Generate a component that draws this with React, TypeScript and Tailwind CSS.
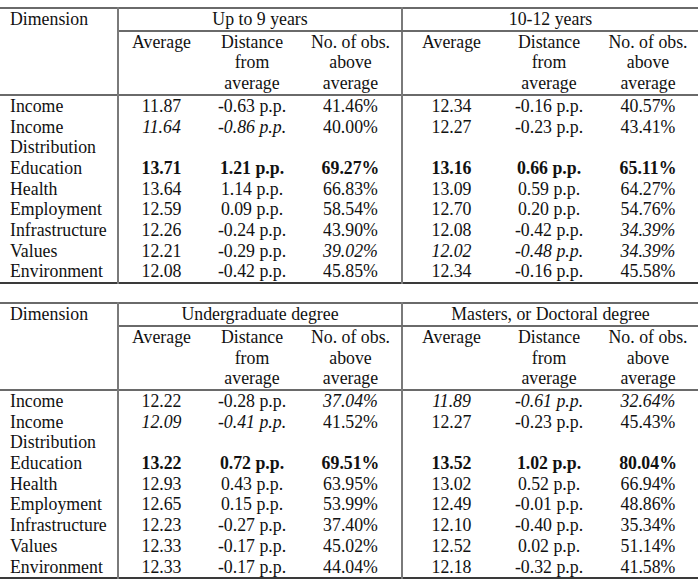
import React from "react";

type Cell = { v: string; s?: "b" | "i" };
type Row = { name: string[]; cells: Cell[] };

const n = (v: string): Cell => ({ v });
const b = (v: string): Cell => ({ v, s: "b" });
const it = (v: string): Cell => ({ v, s: "i" });

const t1: Row[] = [
  { name: ["Income"], cells: [n("11.87"), n("-0.63 p.p."), n("41.46%"), n("12.34"), n("-0.16 p.p."), n("40.57%")] },
  { name: ["Income", "Distribution"], cells: [it("11.64"), it("-0.86 p.p."), n("40.00%"), n("12.27"), n("-0.23 p.p."), n("43.41%")] },
  { name: ["Education"], cells: [b("13.71"), b("1.21 p.p."), b("69.27%"), b("13.16"), b("0.66 p.p."), b("65.11%")] },
  { name: ["Health"], cells: [n("13.64"), n("1.14 p.p."), n("66.83%"), n("13.09"), n("0.59 p.p."), n("64.27%")] },
  { name: ["Employment"], cells: [n("12.59"), n("0.09 p.p."), n("58.54%"), n("12.70"), n("0.20 p.p."), n("54.76%")] },
  { name: ["Infrastructure"], cells: [n("12.26"), n("-0.24 p.p."), n("43.90%"), n("12.08"), n("-0.42 p.p."), it("34.39%")] },
  { name: ["Values"], cells: [n("12.21"), n("-0.29 p.p."), it("39.02%"), it("12.02"), it("-0.48 p.p."), it("34.39%")] },
  { name: ["Environment"], cells: [n("12.08"), n("-0.42 p.p."), n("45.85%"), n("12.34"), n("-0.16 p.p."), n("45.58%")] },
];

const t2: Row[] = [
  { name: ["Income"], cells: [n("12.22"), n("-0.28 p.p."), it("37.04%"), it("11.89"), it("-0.61 p.p."), it("32.64%")] },
  { name: ["Income", "Distribution"], cells: [it("12.09"), it("-0.41 p.p."), n("41.52%"), n("12.27"), n("-0.23 p.p."), n("45.43%")] },
  { name: ["Education"], cells: [b("13.22"), b("0.72 p.p."), b("69.51%"), b("13.52"), b("1.02 p.p."), b("80.04%")] },
  { name: ["Health"], cells: [n("12.93"), n("0.43 p.p."), n("63.95%"), n("13.02"), n("0.52 p.p."), n("66.94%")] },
  { name: ["Employment"], cells: [n("12.65"), n("0.15 p.p."), n("53.99%"), n("12.49"), n("-0.01 p.p."), n("48.86%")] },
  { name: ["Infrastructure"], cells: [n("12.23"), n("-0.27 p.p."), n("37.40%"), n("12.10"), n("-0.40 p.p."), n("35.34%")] },
  { name: ["Values"], cells: [n("12.33"), n("-0.17 p.p."), n("45.02%"), n("12.52"), n("0.02 p.p."), n("51.14%")] },
  { name: ["Environment"], cells: [n("12.33"), n("-0.17 p.p."), n("44.04%"), n("12.18"), n("-0.32 p.p."), n("41.58%")] },
];

const widths = [118, 86, 96, 102, 98, 98, 100];

function Table({ g1, g2, rows }: { g1: string; g2: string; rows: Row[] }) {
  return (
    <table className="table-fixed border-collapse w-[698px] border-t-2 border-b-2 border-t-[#6a6a6a] border-b-[#3a3a3a]">
      <colgroup>
        {widths.map((w, i) => (
          <col key={i} style={{ width: w }} />
        ))}
      </colgroup>
      <tbody>
        <tr>
          <td rowSpan={2} className="align-top pl-[10px] border-r-2 border-r-[#7a7a7a]">
            Dimension
          </td>
          <td colSpan={3} className="text-center border-b-2 border-b-[#6a6a6a] border-r-2 border-r-[#7a7a7a]">
            {g1}
          </td>
          <td colSpan={3} className="text-center border-b-2 border-b-[#6a6a6a]">
            {g2}
          </td>
        </tr>
        <tr className="border-b-2 border-b-[#6a6a6a]">
          <td className="align-top text-center">Average</td>
          <td className="align-top text-center">
            Distance
            <br />
            from
            <br />
            average
          </td>
          <td className="align-top text-center border-r-2 border-r-[#7a7a7a]">
            No. of obs.
            <br />
            above
            <br />
            average
          </td>
          <td className="align-top text-center">Average</td>
          <td className="align-top text-center">
            Distance
            <br />
            from
            <br />
            average
          </td>
          <td className="align-top text-center">
            No. of obs.
            <br />
            above
            <br />
            average
          </td>
        </tr>
        {rows.map((r, ri) => (
          <tr key={ri}>
            <td className="align-top pl-[10px] border-r-2 border-r-[#7a7a7a]">
              {r.name.map((x, k) => (
                <div key={k}>{x}</div>
              ))}
            </td>
            {r.cells.map((c, ci) => (
              <td
                key={ci}
                className={
                  "align-top text-center whitespace-nowrap " +
                  (c.s === "b" ? "font-bold " : c.s === "i" ? "italic " : "") +
                  (ci === 2 ? "border-r-2 border-r-[#7a7a7a]" : "")
                }
              >
                {c.v}
              </td>
            ))}
          </tr>
        ))}
      </tbody>
    </table>
  );
}

export default function App() {
  return (
    <div
      className="w-[700px] h-[586px] bg-white text-[#111] text-[17.8px] leading-[20.7px] pt-[7px] flex flex-col gap-[18px]"
      style={{ fontFamily: '"Liberation Serif", "Times New Roman", serif' }}
    >
      <Table g1="Up to 9 years" g2="10-12 years" rows={t1} />
      <Table g1="Undergraduate degree" g2="Masters, or Doctoral degree" rows={t2} />
    </div>
  );
}
